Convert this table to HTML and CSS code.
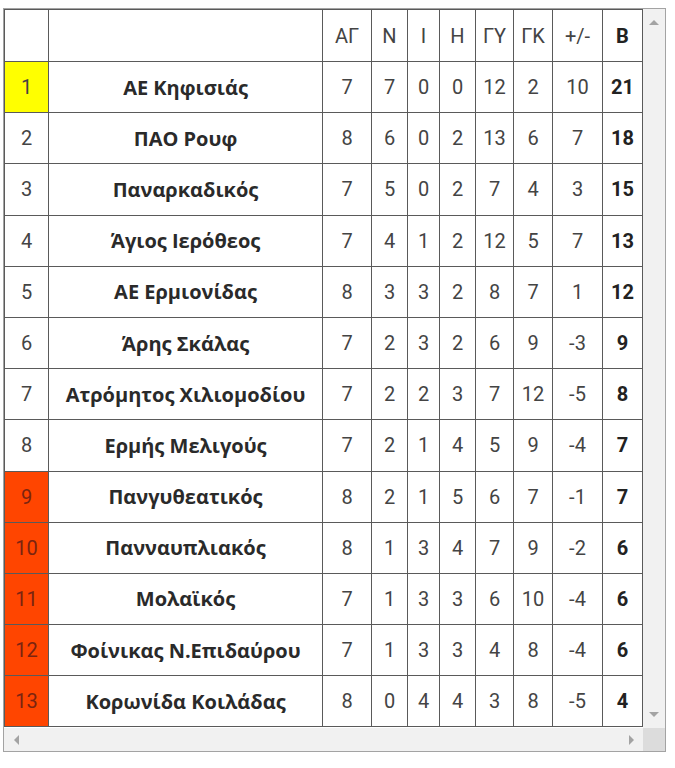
FILE: index.html
```html
<!DOCTYPE html>
<html>
<head>
<meta charset="utf-8">
<link rel="stylesheet" href="styles.css">
</head>
<body>
<div class="frame">
  <div class="content">
    <table class="standings">
      <colgroup>
        <col class="c-rank"><col class="c-team"><col class="c-ag"><col class="c-n"><col class="c-i"><col class="c-h"><col class="c-gy"><col class="c-gk"><col class="c-diff"><col class="c-b">
      </colgroup>
      <thead>
        <tr class="head"><th></th><th></th><th>ΑΓ</th><th>Ν</th><th>Ι</th><th>Η</th><th>ΓΥ</th><th>ΓΚ</th><th>+/-</th><th class="pts">Β</th></tr>
      </thead>
      <tbody>
        <tr><td class="rank top">1</td><td class="team">ΑΕ Κηφισιάς</td><td>7</td><td>7</td><td>0</td><td>0</td><td>12</td><td>2</td><td>10</td><td class="pts">21</td></tr>
        <tr><td class="rank">2</td><td class="team">ΠΑΟ Ρουφ</td><td>8</td><td>6</td><td>0</td><td>2</td><td>13</td><td>6</td><td>7</td><td class="pts">18</td></tr>
        <tr><td class="rank">3</td><td class="team">Παναρκαδικός</td><td>7</td><td>5</td><td>0</td><td>2</td><td>7</td><td>4</td><td>3</td><td class="pts">15</td></tr>
        <tr><td class="rank">4</td><td class="team">Άγιος Ιερόθεος</td><td>7</td><td>4</td><td>1</td><td>2</td><td>12</td><td>5</td><td>7</td><td class="pts">13</td></tr>
        <tr><td class="rank">5</td><td class="team">ΑΕ Ερμιονίδας</td><td>8</td><td>3</td><td>3</td><td>2</td><td>8</td><td>7</td><td>1</td><td class="pts">12</td></tr>
        <tr><td class="rank">6</td><td class="team">Άρης Σκάλας</td><td>7</td><td>2</td><td>3</td><td>2</td><td>6</td><td>9</td><td>-3</td><td class="pts">9</td></tr>
        <tr><td class="rank">7</td><td class="team">Ατρόμητος Χιλιομοδίου</td><td>7</td><td>2</td><td>2</td><td>3</td><td>7</td><td>12</td><td>-5</td><td class="pts">8</td></tr>
        <tr><td class="rank">8</td><td class="team">Ερμής Μελιγούς</td><td>7</td><td>2</td><td>1</td><td>4</td><td>5</td><td>9</td><td>-4</td><td class="pts">7</td></tr>
        <tr><td class="rank down">9</td><td class="team">Πανγυθεατικός</td><td>8</td><td>2</td><td>1</td><td>5</td><td>6</td><td>7</td><td>-1</td><td class="pts">7</td></tr>
        <tr><td class="rank down">10</td><td class="team">Πανναυπλιακός</td><td>8</td><td>1</td><td>3</td><td>4</td><td>7</td><td>9</td><td>-2</td><td class="pts">6</td></tr>
        <tr><td class="rank down">11</td><td class="team">Μολαϊκός</td><td>7</td><td>1</td><td>3</td><td>3</td><td>6</td><td>10</td><td>-4</td><td class="pts">6</td></tr>
        <tr><td class="rank down">12</td><td class="team">Φοίνικας Ν.Επιδαύρου</td><td>7</td><td>1</td><td>3</td><td>3</td><td>4</td><td>8</td><td>-4</td><td class="pts">6</td></tr>
        <tr><td class="rank down">13</td><td class="team">Κορωνίδα Κοιλάδας</td><td>8</td><td>0</td><td>4</td><td>4</td><td>3</td><td>8</td><td>-5</td><td class="pts">4</td></tr>
      </tbody>
    </table>
  </div>
  <div class="vscroll"><span class="arrow up"></span><span class="arrow down-a"></span></div>
  <div class="hscroll"><span class="arrow left"></span><span class="arrow right"></span></div>
  <div class="corner"></div>
</div>
</body>
</html>
```

FILE: styles.css
```css
html, body {
  margin: 0;
  padding: 0;
  background: #ffffff;
}
.frame {
  margin: 8px 0 0 3px;
  width: 661px;
  height: 742px;
  border: 1px solid #a3a3a3;
  display: grid;
  grid-template-columns: 639px 22px;
  grid-template-rows: 719px 23px;
  overflow: hidden;
}
.content {
  overflow: hidden;
  background: #fff;
}
.standings {
  border-collapse: collapse;
  table-layout: fixed;
  width: 639px;
  font-family: Roboto, "Noto Sans", sans-serif;
  font-size: 20px;
  color: #444;
}
.c-rank { width: 44px; }
.c-team { width: 274px; }
.c-ag { width: 49px; }
.c-n { width: 36px; }
.c-i { width: 32px; }
.c-h { width: 36px; }
.c-gy { width: 38px; }
.c-gk { width: 39px; }
.c-diff { width: 50px; }
.c-b { width: 40px; }
.standings th, .standings td {
  border: 1px solid #5a5a5a;
  text-align: center;
  vertical-align: middle;
  padding: 0;
  font-weight: 400;
}
.standings tr.head { height: 52px; }
.standings tbody tr { height: 51.2px; }
.standings th { color: #444; }
.standings .pts {
  font-weight: 700;
  color: #222;
}
.standings .team {
  font-family: "Open Sans", "Noto Sans", sans-serif;
  font-weight: 700;
  font-size: 20px;
  color: #2a2a2a;
}
.rank.top { background: #ffff00; }
.rank.down { background: #ff4500; color: #7a2410; }
.vscroll {
  background: #f1f1f1;
  display: flex;
  flex-direction: column;
  justify-content: space-between;
  align-items: center;
  padding: 11px 0 11px 0;
}
.hscroll {
  background: #f1f1f1;
  display: flex;
  justify-content: space-between;
  align-items: center;
  padding: 0 9px 0 10px;
}
.corner { background: #dcdcdc; }
.arrow {
  width: 0;
  height: 0;
  display: block;
}
.arrow.up {
  border-left: 5px solid transparent;
  border-right: 5px solid transparent;
  border-bottom: 5px solid #a3a3a3;
}
.arrow.down-a {
  border-left: 5px solid transparent;
  border-right: 5px solid transparent;
  border-top: 5px solid #a3a3a3;
}
.arrow.left {
  border-top: 5px solid transparent;
  border-bottom: 5px solid transparent;
  border-right: 5px solid #a3a3a3;
}
.arrow.right {
  border-top: 5px solid transparent;
  border-bottom: 5px solid transparent;
  border-left: 5px solid #a3a3a3;
}
```
